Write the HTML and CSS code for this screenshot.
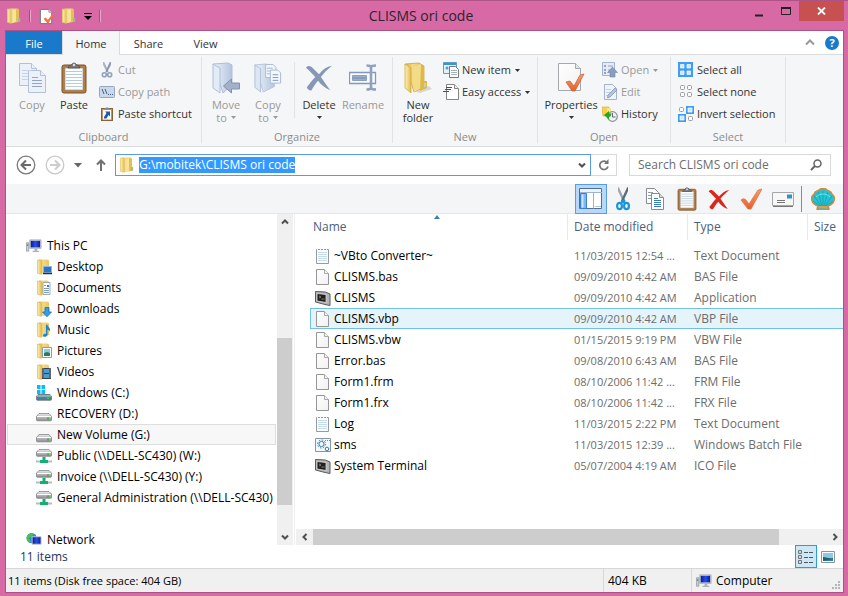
FILE: index.html
```html
<!DOCTYPE html>
<html lang="en">
<head>
<meta charset="utf-8">
<title>CLISMS ori code</title>
<link rel="stylesheet" href="styles.css">
</head>
<body>
<svg class="sprite" aria-hidden="true">
  <defs>
    <linearGradient id="gold" x1="0" x2="1"><stop offset="0" stop-color="#fdf3b6"/><stop offset="1" stop-color="#e3b94f"/></linearGradient>
    <linearGradient id="gold2" x1="0" x2="1"><stop offset="0" stop-color="#d9ae48"/><stop offset=".4" stop-color="#f3d981"/><stop offset="1" stop-color="#e9c664"/></linearGradient>
    <linearGradient id="pale" x1="0" x2="1"><stop offset="0" stop-color="#eef3fa"/><stop offset="1" stop-color="#b4c5de"/></linearGradient>
    <linearGradient id="steel" x1="0" x2="0" y1="0" y2="1"><stop offset="0" stop-color="#b3c0d5"/><stop offset=".5" stop-color="#7d93b6"/><stop offset="1" stop-color="#b3c0d5"/></linearGradient>
    <linearGradient id="tick" x1="0" x2="0" y1="0" y2="1"><stop offset="0" stop-color="#f7a072"/><stop offset="1" stop-color="#e3602f"/></linearGradient>
    <linearGradient id="screen" x1="0" x2="1"><stop offset="0" stop-color="#0018a8"/><stop offset=".5" stop-color="#2a4fe0"/><stop offset="1" stop-color="#0a1aa0"/></linearGradient>
    <linearGradient id="disk" x1="0" x2="0" y1="0" y2="1"><stop offset="0" stop-color="#e8e8ea"/><stop offset="1" stop-color="#8b8b92"/></linearGradient>
    <linearGradient id="sheet" x1="0" x2="1" y1="0" y2="1"><stop offset="0" stop-color="#fff"/><stop offset="1" stop-color="#f1f1f1"/></linearGradient>
  </defs>

  <symbol id="i-folder" viewBox="0 0 16 16">
    <path d="M3 .5h8.500l1.500 1v12l-6 1.500-5-1z" fill="url(#gold2)"/>
    <path d="M1.500 1l4 1v13.300l-4-1z" fill="url(#gold)" stroke="#e6ca70" stroke-width=".8"/>
    <path d="M6.500 2.500l3.500-1.500v12.500l-3.500 1.500z" fill="#f6e596"/><path d="M10 1l3 .8v8l1.200.7v3L10 14.500z" fill="#e3c057"/>
    <path d="M13 10v3.500" stroke="#5bb0d8"/>
  </symbol>
  <symbol id="i-docheck" viewBox="0 0 16 18">
    <path d="M1.500 1.500h9l3 3v12h-12z" fill="#fff" stroke="#777"/><path d="M10.500 1.500v3h3" fill="#ddd" stroke="#999"/>
    <path d="M5 11.500l2-1.500 2.500 2.500L14 6.500h2L10 16.500H9z" fill="#ef7840"/>
  </symbol>
  <symbol id="i-copy-l" viewBox="0 0 28 32">
    <g stroke="#b3c1d7" fill="#ecf1f9"><path d="M1.500 1.500h12l5 5v17h-17z"/><path d="M13.500 1.500v5h5"/><path d="M10.500 8.500h12l5 5v17h-17z"/><path d="M22.500 8.500v5h5"/></g>
    <path d="M4 8.500h9M4 11.500h6M4 14.500h6M4 17.500h6" stroke="#c8d4e6"/><path d="M14 15.500h6M14 18.500h10M14 21.500h10M14 24.500h10" stroke="#8fa6c9"/>
  </symbol>
  <symbol id="i-paste" viewBox="0 0 26 32">
    <rect x="1" y="3" width="24" height="28" rx="2" fill="#b47d40" stroke="#7d5329"/><path d="M4 6h18v22H4z" fill="#fcfdfe" stroke="#8d9aa5" stroke-width=".7"/>
    <path d="M5 9.500h16M5 12.500h16M5 15.500h16M5 18.500h16M5 21.500h16M5 24.500h16" stroke="#b9cadb"/>
    <path d="M7 6c0-2 2-2.500 3.500-3C11 .5 15 .5 15.500 3 17 3.500 19 4 19 6z" fill="#7b7b7b" stroke="#444" stroke-width=".7"/><circle cx="13" cy="3" r="1.200" fill="#ddd"/>
  </symbol>
  <symbol id="i-cut" viewBox="0 0 16 16">
    <path d="M4 0l1.200 0L9.600 9.500 8 10.500 4.200 3z" fill="#a5b1c4"/><path d="M12 0h-1.200L6.400 9.500 8 10.500 11.800 3z" fill="#8796b1"/>
    <circle cx="5.300" cy="12.800" r="2" fill="none" stroke="#8fa1bf" stroke-width="1.600"/><circle cx="10.700" cy="12.800" r="2" fill="none" stroke="#8fa1bf" stroke-width="1.600"/>
  </symbol>
  <symbol id="i-path" viewBox="0 0 16 12">
    <rect x=".5" y=".5" width="15" height="11" rx="1" fill="#cbd8eb" stroke="#94a6c2"/><path d="M3 3l2 5M6 3l2 5" stroke="#4c5f80"/><path d="M9 8.500h1M11 8.500h1M13 8.500h1" stroke="#4c5f80"/>
  </symbol>
  <symbol id="i-shortcut" viewBox="-2 -1 16 16">
    <rect x=".5" y="1.500" width="11" height="12" fill="#c09764" stroke="#8a6238"/><path d="M2 3h8v9.500H2z" fill="#fff"/><path d="M3 2.500c0-1 2-1 2-2h2c0 1 2 1 2 2z" fill="#888"/>
    <path d="M4 4.500h5v5L7.500 8 5.500 11.500 3 11.500V10L5.500 6z" fill="#1b5cab"/>
  </symbol>
  <symbol id="i-move" viewBox="0 0 28 32">
    <path d="M1 2l15 -1 4 2v20l-9 8z" fill="url(#pale)" stroke="#aebfd8"/><path d="M1 2l7 4v25l-7-5z" fill="#e3ebf6" stroke="#aebfd8"/>
    <path d="M27.500 21v6h-8v4l-8-7 8-7v4z" fill="#a2b1c9" stroke="#8192b0"/>
  </symbol>
  <symbol id="i-copyto" viewBox="0 0 30 32">
    <path d="M1 2l12 -1 9 4v20l-12 6z" fill="url(#pale)" stroke="#b6c5db"/><path d="M1 2l6 4v25l-6-5z" fill="#dde7f4" stroke="#aebfd8"/>
    <g fill="#f3f7fc" stroke="#a7b8d2"><path d="M12.500 1.500h8l3 3v11h-11z"/><path d="M17.500 7.500h8l3 3v11h-11z"/></g><path d="M20 12.500h6M20 15.500h6M20 18.500h6" stroke="#7c93b8"/>
    <path d="M14 5.500h6M14 8.500h3M14 11.500h3" stroke="#9fb2ce"/>
  </symbol>
  <symbol id="i-x" viewBox="0 0 30 28"><path d="M1 3C3 0 6 1 8 3L15 10 C19 5 23 2 29 1 24 5 20 9 17 13 20 17 23 22 27 27 21 25 17 21 14 17 11 20 9 24 7 27 5 28 2 26 2 24 5 20 8 16 11 13 8 10 5 6 1 3z"/></symbol>
  <symbol id="i-rename" viewBox="0 0 28 28">
    <path d="M.5 8.500h26v11h-26z" fill="#f9fbfd" stroke="#8498bb" stroke-width="1.300"/><path d="M3.500 11.500h14v5h-14z" fill="url(#steel)" stroke="#8ba0c1"/>
    <path d="M17.500 1.500c2 0 4 0 4.500 1.500 .5-1.500 2-1.500 5-1.500M17.500 25.500c2 0 4 0 4.500-1.500 .5 1.500 2 1.500 5 1.500M22 2.500v22" fill="none" stroke="#8fa1c1" stroke-width="2.600"/>
  </symbol>
  <symbol id="i-newfolder" viewBox="0 0 28 32">
    <path d="M9 29l16-5 3 3-12 4z" fill="#d5d7da"/><path d="M1 2l14-1 5 3v21l-10 5z" fill="url(#gold2)" stroke="#c79a35" stroke-width=".7"/>
    <path d="M1 2l6 4v25l-6-5z" fill="url(#gold)" stroke="#d6ac43" stroke-width=".8"/><path d="M8 6l9-4v24l-7 4z" fill="#f3dc88"/><path d="M17 3l3 1v15h3v7l-7 3z" fill="#e0b846"/><path d="M21 21v4" stroke="#b9dbe9" stroke-width="1.500"/>
  </symbol>
  <symbol id="i-newitem" viewBox="0 0 16 16">
    <path d="M.5.500h13v11H.5z" fill="#e2f1fa" stroke="#5f9cc6"/><path d="M1 1h12v2H1z" fill="#3f93cb"/><circle cx="4" cy="6" r="1.500" fill="#5a9dc8"/>
    <path d="M6.500 4.500h6l3 3v8h-9z" fill="#fff" stroke="#777"/><path d="M8 8.500h6M8 10.500h6M8 12.500h6" stroke="#9fb2c5"/>
  </symbol>
  <symbol id="i-easy" viewBox="0 0 16 16">
    <path d="M3.500.500h8l4 4v11h-12z" fill="#fff" stroke="#858585"/><path d="M11.500.500v4h4" fill="#eee" stroke="#858585"/><path d="M3 3.500h6M0 7.500h6M2 5.500h6" stroke="#1b5cab"/>
  </symbol>
  <symbol id="i-props" viewBox="0 0 28 32">
    <path d="M1.500 1.500h17l5 5v22h-22z" fill="url(#sheet)" stroke="#a5a8ad"/><path d="M18.500 1.500v5h5" fill="#e3e3e3" stroke="#a5a8ad"/>
    <path d="M9 20l4-1 4 5 6-11 4-1-9 17h-3z" fill="url(#tick)" stroke="#c95c2e" stroke-width=".7"/>
  </symbol>
  <symbol id="i-open" viewBox="0 0 16 16">
    <path d="M.5.500h12v13H.5z" fill="#e7edf6" stroke="#a3b3cd"/><path d="M2 3h2v2H2zM2 7h2v2H2zM2 10h2v2H2z" fill="#8ea4c7"/><path d="M6 4h5M6 8h2" stroke="#8ea4c7"/><path d="M10.500 5l5 5.500H13V15H8v-4.500H5.500z" fill="#8a9dbd" stroke="#7488aa" stroke-width=".6"/>
  </symbol>
  <symbol id="i-edit" viewBox="0 0 16 16"><path d="M2.500.500h8l4 4v11h-12z" fill="#f0f4fa" stroke="#a3b3cd"/><path d="M4 5.500h5M4 8.500h4M4 11.500h2" stroke="#c4d0e2"/><path d="M5.500 14L6 11l7-7 2 2-7 7z" fill="#b5c4da" stroke="#8398b9" stroke-width=".8"/></symbol>
  <symbol id="i-history" viewBox="0 0 16 16"><path d="M0 1h7v9H1z" fill="#f6d34b" stroke="#d8a92c" stroke-width=".6"/><path d="M5 2h4v6H5z" fill="#fbe58a"/><circle cx="10.500" cy="10.500" r="4.800" fill="#f0f3f5" stroke="#8b949b" stroke-width="1.200"/><path d="M10.500 7v4h3" fill="none" stroke="#667"/><path d="M2 9l5-4v2.500c2 0 2 0 2.500-.5C9 10 9 10.500 7 11v2.500z" fill="#2aa51f"/></symbol>
  <symbol id="i-all" viewBox="0 0 16 16"><path d="M0 0h15v15H0z" fill="#3f9df3"/><g fill="#cfe6fc" stroke="#fff" stroke-width=".7"><path d="M2.500 2.500h3.500v3.500H2.500zM9 2.500h3.500v3.500H9zM2.500 9h3.500v3.500H2.500zM9 9h3.500v3.500H9z"/></g></symbol>
  <symbol id="i-none" viewBox="0 0 16 16"><g fill="#fff" stroke="#9b9b9b"><rect x="2.500" y="1.500" width="4" height="4" rx="1"/><rect x="9.500" y="1.500" width="4" height="4" rx="1"/><rect x="2.500" y="8.500" width="4" height="4" rx="1"/><rect x="9.500" y="8.500" width="4" height="4" rx="1"/></g></symbol>
  <symbol id="i-invert" viewBox="0 0 16 16"><path d="M8 0h8v8H8zM0 8h8v8H0z" fill="#3f9df3"/><path d="M10 2h4v4h-4zM2 10h4v4H2z" fill="#cfe6fc" stroke="#fff" stroke-width=".7"/><g fill="#fff" stroke="#9b9b9b"><rect x="1.500" y="1.500" width="4" height="4" rx="1"/><rect x="10.500" y="10.500" width="4" height="4" rx="1"/></g></symbol>

  <symbol id="i-panes" viewBox="0 0 24 22"><path d="M.5.500h22v20H.5z" fill="#fff" stroke="#4f6f98"/><path d="M1 1h21v3H1z" fill="#edf3fa"/><path d="M1 4.500h22M14.500 4.500v16" stroke="#9db3cd"/><path d="M1.500 5.500h6v15h-6z" fill="#7fb9f4" stroke="#3a80cd"/><path d="M2.500 6.500h2v13h-2z" fill="#cbe4fc"/><path d="M16 18.500h6" stroke="#b2c7df"/></symbol>
  <symbol id="i-scissors" viewBox="0 0 16 24"><path d="M3 0l1 .5 6 13-1.500 2.500L3 4z" fill="#9ba6b0"/><path d="M13 0l-1 .5-6 13 1.500 2.500L13 4z" fill="#5e6b77"/><g fill="none" stroke="#1c94d8" stroke-width="2.200"><ellipse cx="4.500" cy="19" rx="2.400" ry="3.200"/><ellipse cx="11.500" cy="19" rx="2.400" ry="3.200"/><path d="M6 16l4-3M10 16l-3-2"/></g></symbol>
  <symbol id="i-copy" viewBox="0 0 20 24"><g fill="#fff" stroke="#858b91"><path d="M1.500 1.500h8l4 4v11h-12z"/><path d="M6.500 6.500h8l4 4v12h-12z"/></g><path d="M14.500 6.500v4h4" fill="#ddd" stroke="#858b91"/><path d="M3 5.500h5M3 8.500h3M3 11.500h3" stroke="#8a9cad"/><path d="M9 11.500h4M9 13.500h7M9 15.500h7M9 17.500h7M9 19.500h7" stroke="#3c78b5"/></symbol>
  <symbol id="i-check" viewBox="0 0 22 22"><path d="M1 12c2-2 4-1 5 0l3 4L18 2l4-1L11 21H8z" fill="url(#tick)" stroke="#df6a35" stroke-width=".7"/></symbol>
  <symbol id="i-mail" viewBox="0 0 22 15"><path d="M.5.500h21v13H.5z" fill="#f7f7f7" stroke="#a7a7a7"/><path d="M1 14.500h20" stroke="#777"/><path d="M15 2.500h5v4h-5z" fill="#2e93c8"/><path d="M5 8.500h8M5 10.500h8" stroke="#777"/></symbol>
  <symbol id="i-shell" viewBox="0 0 24 22"><path d="M7 18C0 16-1 9 3 6 4 3 7 3 8 2c2-2 6-2 8 0 1 1 4 1 5 4 4 3 3 10-4 12l1 3c-3 1-9 1-12 0z" fill="#23c3d2" stroke="#d9873c" stroke-width="1.500"/><path d="M12 18V3M11 18L7 4M13 18l4-14M10 18L3 8M14 18l7-10M9 18l-7-5M15 18l7-5" stroke="#0e93ac" stroke-width=".6"/><path d="M5 9c4-4 10-4 14 0" fill="none" stroke="#75e3e6"/><path d="M8 18h8l1 2.500H7z" fill="#e69a45"/></symbol>

  <symbol id="i-pc" viewBox="0 0 17 16"><path d="M.5 4.500h2.500v9H.5z" fill="#c8cdd2" stroke="#8a8f95" stroke-width=".7"/><path d="M1 6h1.500v2H1z" fill="#35c22d"/><path d="M4 1.500h12v9H4z" fill="#d5d9de" stroke="#9ba0a8" stroke-width=".8"/><path d="M5 2.500h10v7H5z" fill="url(#screen)"/><path d="M9 11h3v2h2v1.500H7V13h2z" fill="#aeb3b9"/></symbol>
  <symbol id="f-base" viewBox="0 0 16 16"><path d="M3 .5h8l2 1V13l-5 2-5-1z" fill="url(#gold2)"/><path d="M1.500 1l4 1v13.300l-4-1z" fill="url(#gold)" stroke="#dcb95c" stroke-width=".7"/></symbol>
  <symbol id="i-desktop" viewBox="0 0 16 16"><use href="#f-base"/><path d="M7.500 7.500h8v6h-8z" fill="#2774c8" stroke="#8db8dc"/><path d="M7 14.500h9" stroke="#1d2f55" stroke-width="1.500"/></symbol>
  <symbol id="i-docs" viewBox="0 0 16 16"><use href="#f-base"/><path d="M7 2.500h7v12H7z" fill="#fff" stroke="#8a96a2" stroke-width=".8"/><path d="M8 5.500h2M8 8.500h5M8 10.500h5M8 12.500h5" stroke="#819eb9"/><path d="M11 5h2v2h-2z" fill="#2c84cf"/></symbol>
  <symbol id="i-down" viewBox="0 0 16 16"><use href="#f-base"/><path d="M9 6.500h4V11h2.500L11 15.700 6.500 11H9z" fill="#2ca0ea" stroke="#1a6fb5" stroke-width=".8"/></symbol>
  <symbol id="i-music" viewBox="0 0 16 16"><use href="#f-base"/><path d="M10 3l1.200-.5C12 5 15 6 14 10c-.5-1.500-1-2-2.500-2.500V13c-.5 2-4.500 2.500-4.500.5 0-1.500 1.800-2 3-1.700z" fill="#1c86d6"/></symbol>
  <symbol id="i-pics" viewBox="0 0 16 16"><use href="#f-base"/><path d="M6.500 4.500h9v10h-9z" fill="#fff" stroke="#8e9aa5"/><path d="M8 6h6v7H8z" fill="#8fcbe9"/><path d="M8 10l3-1 3 1v3H8z" fill="#2e7d56"/></symbol>
  <symbol id="i-videos" viewBox="0 0 16 16"><use href="#f-base"/><path d="M6 4h9v11H6z" fill="#3b3f45"/><path d="M8 5h5v4H8zM8 10h5v4H8z" fill="#4b9bd3"/><path d="M7 4.500v10M14 4.500v10" stroke="#d6d6d6" stroke-dasharray="1 1"/></symbol>
  <symbol id="i-drive" viewBox="0 0 16 16"><path d="M3 7.500h10l2.500 3v3.500q0 .8-1 .8h-13q-1 0-1-.8v-3.500z" fill="url(#disk)" stroke="#77777e" stroke-width=".7"/><path d="M1 10.500h14" stroke="#fff"/><path d="M11 11.500h2v2h-2z" fill="#33c21f"/></symbol>
  <symbol id="i-win" viewBox="0 0 16 16"><path d="M2 9.500h12l1.500 2v3q0 .8-1 .8h-13q-1 0-1-.8v-3z" fill="#4a8197" stroke="#61666d" stroke-width=".7"/><path d="M1 11h14" stroke="#c6dce4"/><path d="M11 12.500h2v1.500h-2z" fill="#39d330"/><path d="M1 0h3.500v4H1zM5.500 0H9v4H5.500zM1 5h3.500v4H1zM5.500 5H9v4H5.500z" fill="#08bdf4"/></symbol>
  <symbol id="i-net" viewBox="0 0 16 16"><path d="M3 1.500h10l2.500 2.500v3.500q0 .8-1 .8h-13q-1 0-1-.8V4z" fill="url(#disk)" stroke="#77777e" stroke-width=".7"/><path d="M1 4.500h14" stroke="#fff"/><path d="M11 5.500h2v2h-2z" fill="#33c21f"/><path d="M0 13.500h16" stroke="#b7bcc0" stroke-width="2"/><path d="M6.500 9h3v3H12v3H4v-3h2.500z" fill="#13b071"/></symbol>
  <symbol id="i-network" viewBox="0 0 17 16"><circle cx="6" cy="6" r="5.500" fill="#2b85d8"/><path d="M2 3c2-3 6-2 6-1L6 5 3 6 5 9 4 11C0 9 0 5 2 3z" fill="#45c34a"/><path d="M6.500 4.500h9.500v8H6.500z" fill="url(#screen)" stroke="#c6cbd0"/><path d="M9 14.500h5" stroke="#8d9298" stroke-width="2"/></symbol>

  <symbol id="i-file" viewBox="0 0 16 16"><path d="M1.500.500h8l4 4v11h-12z" fill="url(#sheet)" stroke="#969696"/><path d="M9.500.500v4h4" fill="#f4f4f4" stroke="#a8a8a8"/></symbol>
  <symbol id="i-text" viewBox="0 0 16 16"><path d="M1.500 1.500h12v14h-12z" fill="#fafdff" stroke="#9a9a9a"/><path d="M2 1.500h11" stroke="#fff" stroke-width="1.500" stroke-dasharray="1 2"/><path d="M3 4.500h9M3 6.500h9M3 8.500h9M3 10.500h9M3 12.500h9" stroke="#c6dcea"/></symbol>
  <symbol id="i-term" viewBox="0 0 16 16"><path d="M.5 1.500l10 .5 4.500 2v11.500L10 14.500.5 12z" fill="#b4b4b4" stroke="#5a5a5a"/><path d="M2 3.500l9 1v8l-9-1.500z" fill="#202020" stroke="#dcdcdc" stroke-width=".8"/><path d="M4 6l2 1-2 1M6.500 9h3" fill="none" stroke="#bbb" stroke-width=".6"/></symbol>
  <symbol id="i-bat" viewBox="0 0 16 16"><path d="M.5 1.500h15v13H.5z" fill="#f2f8fc" stroke="#8895a2"/><path d="M10 3.500h5" stroke="#6b8bb0" stroke-dasharray="1 1"/><circle cx="6.500" cy="7" r="2.600" fill="none" stroke="#3c79ad" stroke-width="1"/><circle cx="6.500" cy="7" r="4" fill="none" stroke="#3c79ad" stroke-dasharray="1.500 1.600"/><circle cx="12" cy="12" r="1.800" fill="#fff" stroke="#3c79ad"/></symbol>
  <symbol id="i-chev" viewBox="0 0 8 8"><path d="M1 5.500L4 2.500l3 3" fill="none" stroke="#505050" stroke-width="2"/></symbol>
  <symbol id="i-caret" viewBox="0 0 5 3"><path d="M0 0h5L2.500 3z" fill="currentColor"/></symbol>
</svg>

<header class="titlebar">
  <div class="quick">
    <svg class="i16"><use href="#i-folder"/></svg><span class="bar"></span>
    <button aria-label="Properties"><svg class="i-q"><use href="#i-docheck"/></svg></button>
    <button aria-label="New folder"><svg class="i16"><use href="#i-folder"/></svg></button>
    <button aria-label="Customize toolbar"><svg width="8" height="7"><path d="M0 .5h8" stroke="#000"/><path d="M0 3h8L4 7z"/></svg></button>
    <span class="bar"></span>
  </div>
  <h1>CLISMS ori code</h1>
  <div class="winbtns">
    <button aria-label="Minimize"><svg width="10" height="11"><path d="M1 9.500h8" stroke="#222" stroke-width="2"/></svg></button>
    <button aria-label="Maximize"><svg width="10" height="8"><path d="M.5 1.500h9v6h-9z" fill="none" stroke="#222"/><path d="M0 1h10" stroke="#222" stroke-width="2"/></svg></button>
    <button class="close" aria-label="Close"><svg width="9" height="8"><path d="M1 .5l7 7M8 .5l-7 7" stroke="#fff" stroke-width="1.800"/></svg></button>
  </div>
</header>

<main class="frame">
  <nav class="tabs" aria-label="Ribbon tabs">
    <button class="file">File</button><button class="active">Home</button><button>Share</button><button>View</button>
    <div class="tabs-end">
      <button aria-label="Collapse ribbon"><svg width="10" height="7"><path d="M1 5.500L5 1.500l4 4" fill="none" stroke="#999" stroke-width="2"/></svg></button>
      <button class="help" aria-label="Help">?</button>
    </div>
  </nav>

  <section class="ribbon">
    <div class="group g-clip">
      <div class="tools">
        <button class="big off"><svg class="ic-big"><use href="#i-copy-l"/></svg>Copy</button>
        <button class="big"><svg class="ic-big"><use href="#i-paste"/></svg>Paste</button>
        <div class="stack">
          <button class="off"><svg class="i16"><use href="#i-cut"/></svg>Cut</button>
          <button class="off"><svg class="i16"><use href="#i-path"/></svg>Copy path</button>
          <button><svg class="i16"><use href="#i-shortcut"/></svg>Paste shortcut</button>
        </div>
      </div>
      <h2>Clipboard</h2>
    </div>
    <div class="group g-org">
      <div class="tools">
        <button class="big off"><svg class="ic-big"><use href="#i-move"/></svg>Move<span>to <svg class="caret"><use href="#i-caret"/></svg></span></button>
        <button class="big off"><svg class="ic-big"><use href="#i-copyto"/></svg>Copy<span>to <svg class="caret"><use href="#i-caret"/></svg></span></button>
        <span class="split"></span>
        <button class="big"><svg class="ic-big steel"><use href="#i-x"/></svg>Delete<span><svg class="caret"><use href="#i-caret"/></svg></span></button>
        <button class="big off"><svg class="ic-big"><use href="#i-rename"/></svg>Rename</button>
      </div>
      <h2>Organize</h2>
    </div>
    <div class="group g-new">
      <div class="tools">
        <button class="big"><svg class="ic-big"><use href="#i-newfolder"/></svg>New<span>folder</span></button>
        <div class="stack">
          <button><svg class="i16"><use href="#i-newitem"/></svg>New item<svg class="caret"><use href="#i-caret"/></svg></button>
          <button><svg class="i16"><use href="#i-easy"/></svg>Easy access<svg class="caret"><use href="#i-caret"/></svg></button>
        </div>
      </div>
      <h2>New</h2>
    </div>
    <div class="group g-open">
      <div class="tools">
        <button class="big"><svg class="ic-big"><use href="#i-props"/></svg>Properties<span><svg class="caret"><use href="#i-caret"/></svg></span></button>
        <div class="stack">
          <button class="off"><svg class="i16"><use href="#i-open"/></svg>Open<svg class="caret"><use href="#i-caret"/></svg></button>
          <button class="off"><svg class="i16"><use href="#i-edit"/></svg>Edit</button>
          <button><svg class="i16"><use href="#i-history"/></svg>History</button>
        </div>
      </div>
      <h2>Open</h2>
    </div>
    <div class="group g-sel">
      <div class="tools">
        <div class="stack">
          <button><svg class="i16"><use href="#i-all"/></svg>Select all</button>
          <button><svg class="i16"><use href="#i-none"/></svg>Select none</button>
          <button><svg class="i16"><use href="#i-invert"/></svg>Invert selection</button>
        </div>
      </div>
      <h2>Select</h2>
    </div>
  </section>

  <section class="address">
    <button aria-label="Back"><svg width="20" height="20"><circle cx="10" cy="10" r="8.800" fill="none" stroke="#7a7a7a" stroke-width="1.300"/><path d="M15 10H6M10 5.500L5.500 10l4.500 4.500" fill="none" stroke="#6a6a6a" stroke-width="2"/></svg></button>
    <button aria-label="Forward"><svg width="20" height="20"><circle cx="10" cy="10" r="8.800" fill="none" stroke="#c9c9c9" stroke-width="1.300"/><path d="M5 10h9M10 5.500l4.500 4.500-4.500 4.500" fill="none" stroke="#ccc" stroke-width="2"/></svg></button>
    <button aria-label="Recent locations"><svg width="8" height="5"><path d="M0 0h8L4 4.500z" fill="#666"/></svg></button>
    <button aria-label="Up"><svg width="10" height="12"><path d="M5 12V2M1 5.500L5 1.500l4 4" fill="none" stroke="#707070" stroke-width="2"/></svg></button>
    <div class="pathbox">
      <svg class="i16"><use href="#i-folder"/></svg>
      <input id="path" type="text" aria-label="Address" value="G:\mobitek\CLISMS ori code">
      <button aria-label="Previous locations"><svg class="chev down"><use href="#i-chev"/></svg></button>
    </div>
    <button class="refresh" aria-label="Refresh"><svg width="12" height="12"><path d="M9.500 4A4.200 4.200 0 1 0 10 7.500" fill="none" stroke="#757575" stroke-width="1.700"/><path d="M10.500 0v5H6z" fill="#757575"/></svg></button>
    <div class="search">
      <input type="text" aria-label="Search" placeholder="Search CLISMS ori code">
      <svg width="12" height="12"><circle cx="7.500" cy="4.500" r="3.500" fill="none" stroke="#666" stroke-width="1.500"/><path d="M5 7L1 11" stroke="#666" stroke-width="2"/></svg>
    </div>
  </section>

  <section class="toolbar">
    <button class="on" aria-label="Navigation pane"><svg width="24" height="22"><use href="#i-panes"/></svg></button>
    <button aria-label="Cut"><svg width="16" height="24"><use href="#i-scissors"/></svg></button>
    <button aria-label="Copy"><svg width="20" height="24"><use href="#i-copy"/></svg></button>
    <button aria-label="Paste"><svg width="20" height="24"><use href="#i-paste"/></svg></button>
    <button class="red" aria-label="Delete"><svg width="22" height="21"><use href="#i-x"/></svg></button>
    <button aria-label="Properties"><svg width="22" height="22"><use href="#i-check"/></svg></button>
    <button aria-label="E-mail"><svg width="22" height="15"><use href="#i-mail"/></svg></button>
    <span class="tbsep"></span>
    <button aria-label="Classic Shell"><svg width="24" height="22"><use href="#i-shell"/></svg></button>
  </section>

  <div class="panes">
    <nav class="tree" aria-label="Folders">
      <ul>
        <li class="root"><svg class="i16"><use href="#i-pc"/></svg>This PC</li>
        <li><svg class="i16"><use href="#i-desktop"/></svg>Desktop</li>
        <li><svg class="i16"><use href="#i-docs"/></svg>Documents</li>
        <li><svg class="i16"><use href="#i-down"/></svg>Downloads</li>
        <li><svg class="i16"><use href="#i-music"/></svg>Music</li>
        <li><svg class="i16"><use href="#i-pics"/></svg>Pictures</li>
        <li><svg class="i16"><use href="#i-videos"/></svg>Videos</li>
        <li><svg class="i16"><use href="#i-win"/></svg>Windows (C:)</li>
        <li><svg class="i16"><use href="#i-drive"/></svg>RECOVERY (D:)</li>
        <li class="current"><svg class="i16"><use href="#i-drive"/></svg>New Volume (G:)</li>
        <li><svg class="i16"><use href="#i-net"/></svg>Public (\\DELL-SC430) (W:)</li>
        <li><svg class="i16"><use href="#i-net"/></svg>Invoice (\\DELL-SC430) (Y:)</li>
        <li><svg class="i16"><use href="#i-net"/></svg>General Administration (\\DELL-SC430) (Z:)</li>
        <li class="root gap"><svg class="i16"><use href="#i-network"/></svg>Network</li>
      </ul>
    </nav>
    <div class="scroll-v">
      <button aria-label="Scroll up"><svg class="chev"><use href="#i-chev"/></svg></button>
      <i class="before"></i><i class="thumb"></i><i class="after"></i>
      <button aria-label="Scroll down"><svg class="chev down"><use href="#i-chev"/></svg></button>
    </div>
    <section class="files">
      <div class="listing">
        <table>
          <colgroup><col class="c-name"><col class="c-date"><col class="c-type"><col></colgroup>
          <thead><tr><th><span>Name</span><svg class="sort" width="6" height="4"><path d="M0 4l3-4 3 4z" fill="#3c7fb1"/></svg></th><th><span>Date modified</span></th><th><span>Type</span></th><th><span>Size</span></th></tr></thead>
          <tbody>
            <tr><td><svg class="i16"><use href="#i-text"/></svg>~VBto Converter~</td><td>11/03/2015 12:54 ...</td><td>Text Document</td><td></td></tr>
            <tr><td><svg class="i16"><use href="#i-file"/></svg>CLISMS.bas</td><td>09/09/2010 4:42 AM</td><td>BAS File</td><td></td></tr>
            <tr><td><svg class="i16"><use href="#i-term"/></svg>CLISMS</td><td>09/09/2010 4:42 AM</td><td>Application</td><td></td></tr>
            <tr class="sel"><td><svg class="i16"><use href="#i-file"/></svg>CLISMS.vbp</td><td>09/09/2010 4:42 AM</td><td>VBP File</td><td></td></tr>
            <tr><td><svg class="i16"><use href="#i-file"/></svg>CLISMS.vbw</td><td>01/15/2015 9:19 PM</td><td>VBW File</td><td></td></tr>
            <tr><td><svg class="i16"><use href="#i-file"/></svg>Error.bas</td><td>09/08/2010 6:43 AM</td><td>BAS File</td><td></td></tr>
            <tr><td><svg class="i16"><use href="#i-file"/></svg>Form1.frm</td><td>08/10/2006 11:42 ...</td><td>FRM File</td><td></td></tr>
            <tr><td><svg class="i16"><use href="#i-file"/></svg>Form1.frx</td><td>08/10/2006 11:42 ...</td><td>FRX File</td><td></td></tr>
            <tr><td><svg class="i16"><use href="#i-text"/></svg>Log</td><td>11/03/2015 2:22 PM</td><td>Text Document</td><td></td></tr>
            <tr><td><svg class="i16"><use href="#i-bat"/></svg>sms</td><td>11/03/2015 12:39 ...</td><td>Windows Batch File</td><td></td></tr>
            <tr><td><svg class="i16"><use href="#i-term"/></svg>System Terminal</td><td>05/07/2004 4:19 AM</td><td>ICO File</td><td></td></tr>
          </tbody>
        </table>
      </div>
      <div class="scroll-h">
        <button aria-label="Scroll left"><svg class="chev left"><use href="#i-chev"/></svg></button>
        <i class="thumb"></i><i class="after"></i>
        <button aria-label="Scroll right"><svg class="chev right"><use href="#i-chev"/></svg></button>
      </div>
    </section>
  </div>

  <section class="details">
    <span class="count">11 items</span>
    <button class="on" aria-label="Details view"><svg width="16" height="14"><path d="M.5.500h3v3h-3zM.5 5.500h3v3h-3zM.5 10.500h3v3h-3z" fill="#fff" stroke="#777"/><path d="M6 2.500h10M6 7.500h10M6 12.500h10" stroke="#555" stroke-dasharray="4 1"/><path d="M2 1.500v1M2 11.500v1" stroke="#2467a8"/><path d="M2 6.500v1" stroke="#c33"/></svg></button>
    <button aria-label="Thumbnail view"><svg width="14" height="12"><path d="M.5.500h13v11H.5z" fill="#fff" stroke="#8a949c"/><path d="M2 2h10v8H2z" fill="#8fc7ea"/><path d="M2 6c4 0 6 2 10 1v3H2z" fill="#22675e"/><path d="M2 10h10V8z" fill="#2f82bd"/></svg></button>
  </section>
  <footer class="status">
    <span class="s-main">11 items (Disk free space: 404 GB)</span>
    <span class="s-size">404 KB</span>
    <span class="s-place"><svg class="i16"><use href="#i-pc"/></svg>Computer</span>
    <svg class="grip" width="9" height="9"><path d="M6 0h2v2H6zM3 3h2v2H3zM6 3h2v2H6zM0 6h2v2H0zM3 6h2v2H3zM6 6h2v2H6z" fill="#b5b5b5"/></svg>
  </footer>
</main>
<script src="script.js"></script>
</body>
</html>
```
FILE: styles.css
```css
* { box-sizing: border-box; }
body {
  margin: 0;
  height: 100vh;
  display: flex;
  flex-direction: column;
  background: #d769a4;
  border-top: 1px solid #ae5485;
  font: 12px/16px "Open Sans", "Noto Sans", sans-serif;
  color: #000;
  overflow: hidden;
}
svg { display: block; flex: none; }
button, input { font: inherit; color: inherit; border: 0; padding: 0; margin: 0; background: none; }
h1, h2, ul { margin: 0; padding: 0; font-weight: normal; list-style: none; }
.sprite { position: absolute; width: 0; height: 0; }
.i16 { width: 16px; height: 16px; }

/* title bar */
.titlebar { display: grid; grid-template-columns: 1fr auto 1fr; height: 29px; flex: none; padding: 0 4px 0 6px; }
.titlebar h1 { font-size: 14px; line-height: 30px; color: #2f2230; margin-right: 8px; }
.quick { display: flex; align-items: center; gap: 7px; }
.i-q { width: 15px; height: 17px; }
.quick .bar { width: 2px; height: 12px; background: #a2537c; border-right: 1px solid #eaa6c9; margin-right: 1px; }
.winbtns { display: flex; justify-content: flex-end; align-items: flex-start; }
.winbtns button { width: 27px; height: 20px; display: grid; place-items: center; }
.winbtns .close { width: 45px; background: #c75050; }

.frame {
  flex: 1; min-height: 0; margin: 0 4px 3px 5px;
  border: 1px solid #ac5384;
  display: flex; flex-direction: column; background: #fff;
}

/* tabs */
.tabs { display: flex; flex: none; height: 24px; border-bottom: 1px solid #dadbdc; color: #333; font-size: 11px; }
.tabs > button { width: 57px; padding-top: 2px; }
.tabs .file { width: 56px; height: 23px; background: #1979ca; color: #fff; }
.tabs .active { width: 58px; height: 24px; background: #f5f6f7; border: 1px solid #dadbdc; border-width: 0 1px; }
.tabs-end { margin-left: auto; display: flex; align-items: center; gap: 10px; padding-right: 4px; }
.tabs-end .help { width: 14px; height: 14px; border-radius: 50%; background: #1979ca; color: #fff; font-weight: bold; line-height: 14px; }

/* ribbon */
.ribbon { display: flex; flex: none; height: 92px; background: #f5f6f7; border-bottom: 1px solid #dadbdc; padding: 2px 0 3px; color: #333; font-size: 11px; }
.group { display: flex; flex-direction: column; justify-content: space-between; border-right: 1px solid #e2e3e4; }
.group h2 { font-size: 11px; text-align: center; color: #8c8c8c; line-height: 13px; }
.tools { display: flex; align-items: flex-start; padding: 5px 0 0 5px; }
.tools button { white-space: nowrap; }
.big { width: 42px; display: flex; flex-direction: column; align-items: center; line-height: 13px; }
.big span { display: flex; align-items: center; justify-content: center; gap: 4px; min-height: 13px; }
.ic-big { width: 28px; height: 32px; margin-bottom: 4px; }
.steel { fill: #8798b7; }
.off { color: #999; }
.caret { width: 5px; height: 3px; }
.stack { display: flex; flex-direction: column; margin-top: -3px; }
.stack button { display: flex; align-items: center; gap: 3px; height: 22px; }
.stack .caret { margin-left: 1px; }
.split { width: 1px; height: 56px; margin: 0 3px 0 5px; background: #e2e3e4; }
.g-clip { width: 196px; }
.g-clip .stack { margin-left: 4px; }
.g-org { width: 191px; }
.g-org .tools { padding-left: 3px; }
.g-org .big:last-child { width: 46px; }
.g-new { width: 145px; }
.g-new .tools { padding-left: 4px; }
.g-new .stack { margin-left: 4px; }
.g-open { width: 133px; }
.g-open .big { width: 56px; }
.g-open .stack { margin-left: 3px; }
.g-sel { width: 115px; }
.g-sel .tools { padding-left: 7px; }

/* address row */
.address { display: flex; flex: none; align-items: center; height: 37px; padding: 0 12px 1px 10px; }
.address > button { display: grid; place-items: center; margin-right: 9px; }
.address > button:nth-of-type(3) { margin-right: 14px; }
.pathbox { flex: 1; display: flex; align-items: center; height: 22px; border: 1px solid #569de5; padding: 0 4px 0 3px; }
.pathbox input { flex: 1; min-width: 0; margin-left: 4px; outline: 0; }
.pathbox input::selection { background: #3399ff; color: #fff; }
.address > .refresh { width: 26px; height: 22px; border: 1px solid #d9d9d9; border-left: 0; margin-right: 12px; }
.search { width: 202px; height: 22px; border: 1px solid #d9d9d9; display: flex; align-items: center; padding: 0 8px; }
.search input { flex: 1; min-width: 0; outline: 0; }
.search input::placeholder { color: #6d6d6d; opacity: 1; }
.chev { width: 8px; height: 8px; }
.down { transform: rotate(180deg); }
.left { transform: rotate(-90deg); }
.right { transform: rotate(90deg); }

/* icon toolbar */
.toolbar { display: flex; flex: none; justify-content: flex-end; height: 30px; padding-right: 4px; background: #f4f5f7; border-bottom: 1px solid #e6e7ea; }
.toolbar button { width: 32px; height: 30px; display: grid; place-items: center; }
.toolbar .on { background: #b9d7f6; border: 1px solid #569de5; }
.toolbar .red { fill: #d9271c; }
.tbsep { width: 1px; height: 26px; background: #8b8b8b; margin: 2px 5px 0 2px; }

/* panes */
.panes { flex: 1; min-height: 0; display: flex; }
.tree { width: 271px; flex: none; padding: 21px 1px 0; overflow: hidden; }
.tree li { display: flex; align-items: center; gap: 5px; height: 21px; padding-left: 28px; white-space: nowrap; border: 1px solid transparent; overflow: hidden; }
.tree .root { padding-left: 18px; }
.tree .gap { margin-top: 21px; }
.tree .current { background: #f7f7f7; border-color: #dedede; }
.scroll-v { width: 16px; flex: none; display: flex; flex-direction: column; background: #f0f0f0; }
.scroll-v button, .scroll-h button { flex: none; width: 17px; height: 16px; display: grid; place-items: center; }
.thumb { background: #cdcdcd; }
.scroll-v button { width: 16px; }
.scroll-v .before { flex: 108; }
.scroll-v .thumb { flex: 167; margin-right: 1px; }
.scroll-v .after { flex: 24; }
.files { flex: 1; min-width: 0; margin-left: 1px; padding-left: 1px; border-left: 1px solid #f0f0f0; display: flex; flex-direction: column; }
.listing { flex: 1; overflow: hidden; padding-left: 14px; }
.scroll-h { display: flex; flex: none; height: 16px; background: #f0f0f0; }
.scroll-h .thumb { flex: 466; }
.scroll-h .after { flex: 47; }

table { width: 100%; table-layout: fixed; border-spacing: 0; }
.c-name { width: 257px; }
.c-date, .c-type { width: 120px; }
th { position: relative; height: 31px; padding: 0; font-weight: normal; text-align: left; vertical-align: top; color: #4c607a; }
th span { display: block; line-height: 26px; padding-left: 6px; border-left: 1px solid #e5eaf2; }
th:first-child span { padding-left: 3px; border: 0; }
.sort { position: absolute; left: 124px; top: 1px; }
td { height: 21px; padding: 0 0 0 7px; color: #6d6d6d; white-space: nowrap; border: 1px solid transparent; border-width: 1px 0; line-height: 19px; }
td:nth-child(2) { font-size: 11px; }
td:first-child { display: flex; align-items: center; gap: 3px; padding-left: 4px; color: #000; border-left-width: 1px; }
.sel td { background: #e5f3fb; border-color: #70c0e7; }

/* bottom rows */
.details { display: flex; flex: none; height: 23px; padding-right: 4px; color: #1e395b; }
.details .count { margin: 0 auto 0 14px; line-height: 24px; }
.details button { width: 22px; height: 23px; display: grid; place-items: center; }
.details .on { background: #cce8f6; border: 1px solid #26a0da; }
.status { display: flex; flex: none; height: 24px; background: #f0f0f0; border-top: 1px solid #d7d7d7; line-height: 23px; position: relative; }
.s-main { flex: 1; padding-left: 2px; font-size: 11px; }
.s-size { width: 88px; padding-left: 4px; border-left: 1px solid #d7d7d7; }
.s-place { width: 152px; display: flex; align-items: center; gap: 4px; padding-left: 4px; border-left: 1px solid #d7d7d7; }
.grip { position: absolute; right: 2px; bottom: 2px; }
```
FILE: script.js
```js
// The address is ready to be overwritten as soon as the window opens.
document.getElementById("path").select();
```
